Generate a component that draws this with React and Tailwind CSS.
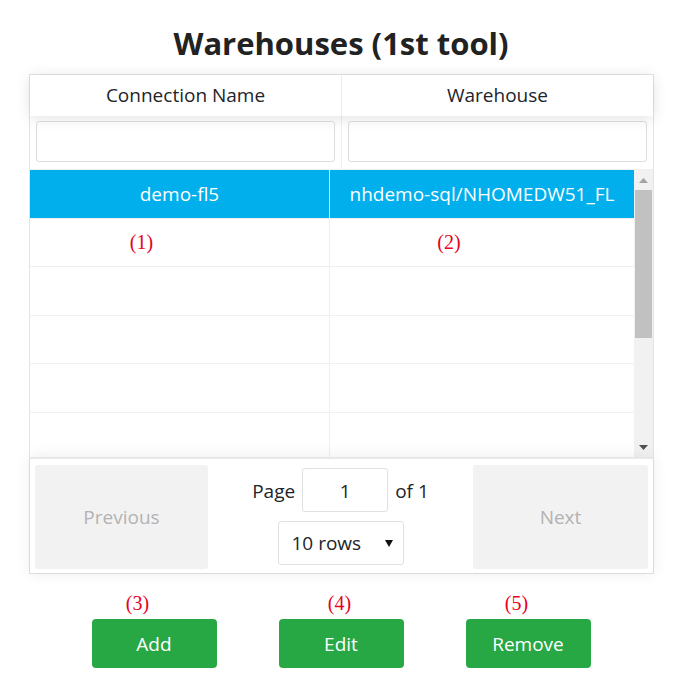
import React from 'react';

const font = { fontFamily: '"Open Sans", "Noto Sans", sans-serif' };

const rows = [
  { name: 'demo-fl5', warehouse: 'nhdemo-sql/NHOMEDW51_FL', selected: true },
  { name: '', warehouse: '', notes: true },
  { name: '', warehouse: '' },
  { name: '', warehouse: '' },
  { name: '', warehouse: '' },
  { name: '', warehouse: '' },
];

const Note = ({ children, className = '' }) => (
  <span className={`font-['Liberation_Serif',serif] text-[20px] text-[#e8001c] leading-none ${className}`}>
    {children}
  </span>
);

const Scrollbar = () => (
  <div className="w-[19px] shrink-0 bg-[#f1f1f1] flex flex-col items-center">
    <div className="h-[20px] w-full flex items-center justify-center">
      <svg width="9" height="5" viewBox="0 0 9 5">
        <path d="M0 5 L4.5 0 L9 5 Z" fill="#a3a3a3" />
      </svg>
    </div>
    <div className="w-[17px] h-[148px] bg-[#c1c1c1]" />
    <div className="flex-1" />
    <div className="h-[20px] w-full flex items-center justify-center">
      <svg width="9" height="5" viewBox="0 0 9 5">
        <path d="M0 0 L9 0 L4.5 5 Z" fill="#505050" />
      </svg>
    </div>
  </div>
);

export default function App() {
  return (
    <div className="w-[684px] h-[699px] bg-white text-[#212529]" style={font}>
      <h1 className="text-center text-[31px] font-bold text-[#222] pt-[22px] leading-[42px] h-[74px] pr-[2px]">
        Warehouses (1st tool)
      </h1>

      <div className="ml-[29px] w-[625px] border border-[#e3e3e3] flex flex-col">
        {/* header */}
        <div className="flex h-[41px] shadow-[0_2px_15px_0_rgba(0,0,0,0.12)] relative z-10 bg-white">
          <div className="flex-1 flex items-center justify-center border-r border-[#ececec] text-[19px]">
            Connection Name
          </div>
          <div className="flex-1 flex items-center justify-center text-[19px]">Warehouse</div>
        </div>

        {/* filters */}
        <div className="flex h-[54px] border-b border-[#f0f0f0]">
          <div className="flex-1 px-[6px] pt-[5px] border-r border-[#f0f0f0]">
            <div className="h-[41px] border border-[#dedede] rounded-[3px] bg-white" />
          </div>
          <div className="flex-1 px-[6px] pt-[5px]">
            <div className="h-[41px] border border-[#dedede] rounded-[3px] bg-white" />
          </div>
        </div>

        {/* body */}
        <div className="flex h-[287px] overflow-hidden">
          <div className="flex-1 flex flex-col">
            {rows.map((r, i) => (
              <div
                key={i}
                className={`flex shrink-0 h-[48.6px] border-b border-[#f0f0f0] text-[19px] ${
                  r.selected ? 'bg-[#00afec] text-white' : ''
                }`}
              >
                <div className="w-[300px] flex items-center justify-center border-r border-[#f0f0f0]">
                  {r.name}
                  {r.notes && <Note className="mr-[76px]">(1)</Note>}
                </div>
                <div className="flex-1 flex items-center justify-center">
                  {r.warehouse}
                  {r.notes && <Note className="mr-[66px]">(2)</Note>}
                </div>
              </div>
            ))}
          </div>
          <Scrollbar />
        </div>

        {/* pagination */}
        <div className="flex border-t-2 border-[#e8e8e8] pt-[6px] pb-[4px] px-[5px] shadow-[0_0_15px_0_rgba(0,0,0,0.08)] relative z-10 bg-white">
          <button className="w-[173px] h-[104px] bg-[#f2f2f2] rounded-[3px] text-[19px] text-[#b3b3b3]">
            Previous
          </button>
          <div className="flex-1 flex flex-col items-center pt-[3px]">
            <div className="flex items-center gap-[7px] text-[19px]">
              <span className="pt-[3px]">Page</span>
              <div className="w-[86px] h-[44px] border border-[#e0e0e0] rounded-[3px] flex items-center justify-center pt-[2px]">
                1
              </div>
              <span className="pt-[3px]">of 1</span>
            </div>
            <div className="mt-[9px] w-[126px] h-[44px] border border-[#e0e0e0] rounded-[3px] flex items-center justify-between pl-[13px] pr-[10px] text-[19px]">
              <span>10 rows</span>
              <svg width="8" height="7" viewBox="0 0 8 7">
                <path d="M0 0 L8 0 L4 7 Z" fill="#111" />
              </svg>
            </div>
          </div>
          <button className="w-[175px] h-[104px] bg-[#f2f2f2] rounded-[3px] text-[19px] text-[#b3b3b3]">
            Next
          </button>
        </div>
      </div>

      {/* actions */}
      <div className="flex justify-center gap-[62px] mt-[19px] pr-[2px]">
        <div className="flex flex-col items-center w-[125px]">
          <Note className="mr-[33px] h-[26px]">(3)</Note>
          <button className="w-[125px] h-[49px] bg-[#28a745] rounded-[4px] text-white text-[19px] pt-[2px]">Add</button>
        </div>
        <div className="flex flex-col items-center w-[125px]">
          <Note className="mr-[3px] h-[26px]">(4)</Note>
          <button className="w-[125px] h-[49px] bg-[#28a745] rounded-[4px] text-white text-[19px] pt-[2px]">Edit</button>
        </div>
        <div className="flex flex-col items-center w-[125px]">
          <Note className="mr-[23px] h-[26px]">(5)</Note>
          <button className="w-[125px] h-[49px] bg-[#28a745] rounded-[4px] text-white text-[19px] pt-[2px]">Remove</button>
        </div>
      </div>
    </div>
  );
}
